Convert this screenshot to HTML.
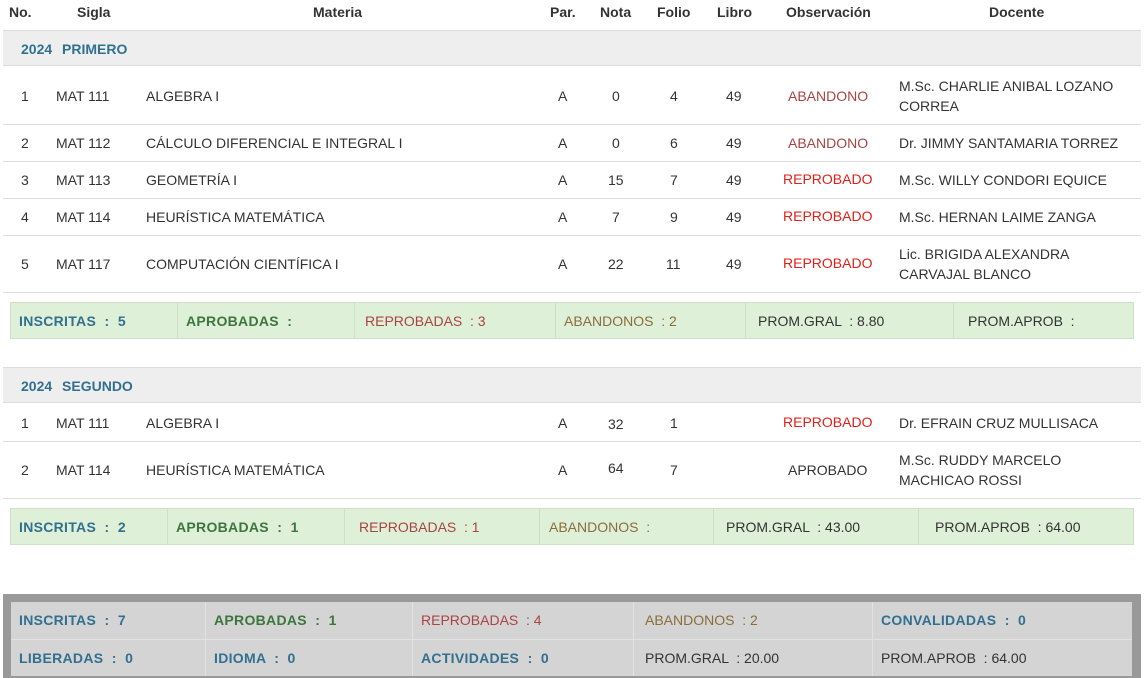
<!DOCTYPE html>
<html><head><meta charset="utf-8"><style>
*{margin:0;padding:0;box-sizing:border-box}
body{width:1145px;height:678px;overflow:hidden;background:#fff;font-family:"Liberation Sans",Arial,sans-serif;font-size:14px;color:#333;position:relative}
.a{position:absolute;white-space:nowrap}
.h{font-weight:bold;top:4px}
.per{position:absolute;left:3px;width:1138px;height:36px;background:#eee;border-top:1px solid #ddd;border-bottom:1px solid #ddd;color:#31708f;font-weight:bold;font-size:14px;padding:10px 0 0 18px;word-spacing:6px}
.ln{position:absolute;left:3px;width:1138px;height:1px;background:#ddd}
.ab{color:#a94442}.rp{color:#e0201a}
.sum{position:absolute;left:10px;width:1124px;height:37px;background:#dff0d8;border:1px solid #d0dfc8}
.sum div,.bx div{position:absolute;top:0;height:100%;border-left:1px solid #cfe0c6;padding-top:10px;padding-left:8px;font-size:14px}
.b{font-weight:bold;letter-spacing:.3px}
.bl{color:#31708f}.gr{color:#3c763d}.rd{color:#a94442}.br{color:#8a6d3b}.dk{color:#333}
.bx{position:absolute;left:3px;top:594px;width:1138px;height:84px;background:#999;}
.bx .r{position:absolute;left:8px;width:1121px;height:37px;background:#d4d4d4;border:none;padding:0}
.bx .r div{border-left:1px solid #e2e2e2}
</style></head><body>
<div class="a h" style="left:9px">No.</div>
<div class="a h" style="left:77px">Sigla</div>
<div class="a h" style="left:313px">Materia</div>
<div class="a h" style="left:550px">Par.</div>
<div class="a h" style="left:600px">Nota</div>
<div class="a h" style="left:657px">Folio</div>
<div class="a h" style="left:717px">Libro</div>
<div class="a h" style="left:786px">Observación</div>
<div class="a h" style="left:989px">Docente</div>

<div class="per" style="top:30px">2024 PRIMERO</div>

<div class="a" style="left:21px;top:88px">1</div><div class="a" style="left:56px;top:88px">MAT 111</div><div class="a" style="left:146px;top:88px">ALGEBRA I</div><div class="a" style="left:558px;top:88px">A</div><div class="a" style="left:612px;top:88px">0</div><div class="a" style="left:670px;top:88px">4</div><div class="a" style="left:726px;top:88px">49</div><div class="a ab" style="left:788px;top:88px">ABANDONO</div><div class="a" style="left:899px;top:76px;line-height:20px">M.Sc. CHARLIE ANIBAL LOZANO<br>CORREA</div>
<div class="ln" style="top:124px"></div>
<div class="a" style="left:21px;top:135px">2</div><div class="a" style="left:56px;top:135px">MAT 112</div><div class="a" style="left:146px;top:135px">CÁLCULO DIFERENCIAL E INTEGRAL I</div><div class="a" style="left:558px;top:135px">A</div><div class="a" style="left:612px;top:135px">0</div><div class="a" style="left:670px;top:135px">6</div><div class="a" style="left:726px;top:135px">49</div><div class="a ab" style="left:788px;top:135px">ABANDONO</div><div class="a" style="left:899px;top:135px">Dr. JIMMY SANTAMARIA TORREZ</div>
<div class="ln" style="top:161px"></div>
<div class="a" style="left:21px;top:172px">3</div><div class="a" style="left:56px;top:172px">MAT 113</div><div class="a" style="left:146px;top:172px">GEOMETRÍA I</div><div class="a" style="left:558px;top:172px">A</div><div class="a" style="left:608px;top:172px">15</div><div class="a" style="left:670px;top:172px">7</div><div class="a" style="left:726px;top:172px">49</div><div class="a rp" style="left:783px;top:171px">REPROBADO</div><div class="a" style="left:899px;top:172px">M.Sc. WILLY CONDORI EQUICE</div>
<div class="ln" style="top:198px"></div>
<div class="a" style="left:21px;top:209px">4</div><div class="a" style="left:56px;top:209px">MAT 114</div><div class="a" style="left:146px;top:209px">HEURÍSTICA MATEMÁTICA</div><div class="a" style="left:558px;top:209px">A</div><div class="a" style="left:612px;top:209px">7</div><div class="a" style="left:670px;top:209px">9</div><div class="a" style="left:726px;top:209px">49</div><div class="a rp" style="left:783px;top:208px">REPROBADO</div><div class="a" style="left:899px;top:209px">M.Sc. HERNAN LAIME ZANGA</div>
<div class="ln" style="top:235px"></div>
<div class="a" style="left:21px;top:256px">5</div><div class="a" style="left:56px;top:256px">MAT 117</div><div class="a" style="left:146px;top:256px">COMPUTACIÓN CIENTÍFICA I</div><div class="a" style="left:558px;top:256px">A</div><div class="a" style="left:608px;top:256px">22</div><div class="a" style="left:666px;top:256px">11</div><div class="a" style="left:726px;top:256px">49</div><div class="a rp" style="left:783px;top:255px">REPROBADO</div><div class="a" style="left:899px;top:244px;line-height:20px">Lic. BRIGIDA ALEXANDRA<br>CARVAJAL BLANCO</div>
<div class="ln" style="top:292px"></div>

<div class="sum" style="top:302px">
<div class="b bl" style="left:0;border:none">INSCRITAS &nbsp;: &nbsp;5</div>
<div class="b gr" style="left:166px">APROBADAS &nbsp;:</div>
<div class="rd" style="left:343px;padding-left:10px">REPROBADAS &nbsp;: 3</div>
<div class="br" style="left:544px">ABANDONOS &nbsp;: 2</div>
<div class="dk" style="left:734px;padding-left:12px">PROM.GRAL &nbsp;: 8.80</div>
<div class="dk" style="left:942px;padding-left:14px">PROM.APROB &nbsp;:</div>
</div>

<div class="per" style="top:367px">2024 SEGUNDO</div>
<div class="a" style="left:21px;top:415px">1</div><div class="a" style="left:56px;top:415px">MAT 111</div><div class="a" style="left:146px;top:415px">ALGEBRA I</div><div class="a" style="left:558px;top:415px">A</div><div class="a" style="left:608px;top:416px">32</div><div class="a" style="left:670px;top:415px">1</div><div class="a rp" style="left:783px;top:414px">REPROBADO</div><div class="a" style="left:899px;top:415px">Dr. EFRAIN CRUZ MULLISACA</div>
<div class="ln" style="top:441px"></div>
<div class="a" style="left:21px;top:462px">2</div><div class="a" style="left:56px;top:462px">MAT 114</div><div class="a" style="left:146px;top:462px">HEURÍSTICA MATEMÁTICA</div><div class="a" style="left:558px;top:462px">A</div><div class="a" style="left:608px;top:460px">64</div><div class="a" style="left:670px;top:462px">7</div><div class="a" style="left:788px;top:462px">APROBADO</div><div class="a" style="left:899px;top:450px;line-height:20px">M.Sc. RUDDY MARCELO<br>MACHICAO ROSSI</div>
<div class="ln" style="top:498px"></div>

<div class="sum" style="top:508px">
<div class="b bl" style="left:0;border:none">INSCRITAS &nbsp;: &nbsp;2</div>
<div class="b gr" style="left:156px">APROBADAS &nbsp;: &nbsp;1</div>
<div class="rd" style="left:333px;padding-left:14px">REPROBADAS &nbsp;: 1</div>
<div class="br" style="left:528px;padding-left:9px">ABANDONOS &nbsp;:</div>
<div class="dk" style="left:702px;padding-left:12px">PROM.GRAL &nbsp;: 43.00</div>
<div class="dk" style="left:907px;padding-left:16px">PROM.APROB &nbsp;: 64.00</div>
</div>

<div class="bx">
<div class="r" style="top:8px">
<div class="b bl" style="left:0;border:none">INSCRITAS &nbsp;: &nbsp;7</div>
<div class="b gr" style="left:194px">APROBADAS &nbsp;: &nbsp;1</div>
<div class="rd" style="left:401px">REPROBADAS &nbsp;: 4</div>
<div class="br" style="left:622px;padding-left:11px">ABANDONOS &nbsp;: 2</div>
<div class="b bl" style="left:861px">CONVALIDADAS &nbsp;: &nbsp;0</div>
</div>
<div class="r" style="top:45px;border-top:1px solid #e2e2e2">
<div class="b bl" style="left:0;border:none">LIBERADAS &nbsp;: &nbsp;0</div>
<div class="b bl" style="left:194px">IDIOMA &nbsp;: &nbsp;0</div>
<div class="b bl" style="left:401px">ACTIVIDADES &nbsp;: &nbsp;0</div>
<div class="dk" style="left:622px;padding-left:11px">PROM.GRAL &nbsp;: 20.00</div>
<div class="dk" style="left:861px">PROM.APROB &nbsp;: 64.00</div>
</div>
</div>
</body></html>
